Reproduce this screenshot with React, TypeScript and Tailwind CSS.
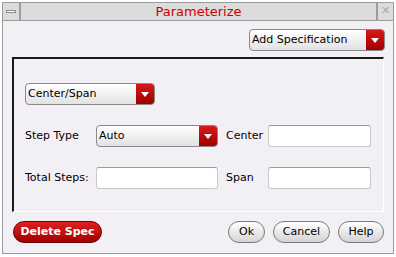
import { ReactNode } from 'react'

const font = { fontFamily: '"DejaVu Sans", Verdana, sans-serif' }

function Dropdown({ label, className }: { label: string; className: string }) {
  return (
    <div className={`flex h-[22px] items-stretch overflow-hidden rounded-[4px] border border-[#8a8a8a] bg-gradient-to-b from-white to-[#e2e2e2] ${className}`}>
      <span className="flex flex-1 items-center pl-[2px] text-[11px] text-black">{label}</span>
      <span className="flex w-[18px] items-center justify-center bg-gradient-to-b from-[#d81818] to-[#a00000]">
        <svg width="8" height="5" viewBox="0 0 8 5"><path d="M0 0h8L4 5z" fill="#fff" /></svg>
      </span>
    </div>
  )
}

function Field({ className }: { className: string }) {
  return <div className={`h-[22px] rounded-[3px] border border-[#c8c8c8] border-t-[#9a9a9a] bg-white ${className}`} />
}

function GrayButton({ children, className }: { children: ReactNode; className: string }) {
  return (
    <button className={`flex h-[22px] items-center justify-center rounded-full border border-[#7a7a7a] bg-gradient-to-b from-white to-[#d4d4d4] text-[11px] text-black ${className}`}>
      {children}
    </button>
  )
}

export default function App() {
  return (
    <div className="h-[257px] w-[396px] bg-white" style={font}>
      <div className="ml-[2px] mt-[2px] flex h-[252px] w-[392px] flex-col border border-[#9c9c9c] bg-[#f3f0f5]">
        {/* title bar */}
        <div className="flex h-[18px] border-b border-[#9c9c9c] bg-[#dcdcdc]">
          <div className="flex w-[18px] items-center justify-center border-r-2 border-[#9c9c9c]">
            <span className="block h-[3px] w-[10px] border border-[#888] bg-white" />
          </div>
          <div className="flex-1 text-center text-[13px] leading-[18px] text-[#cc0000]">Parameterize</div>
          <div className="flex w-[17px] items-center justify-center border-l-2 border-[#9c9c9c] text-[11px] text-[#aaa]">✕</div>
        </div>

        <div className="flex justify-end pr-[8px] pt-[8px]">
          <Dropdown label="Add Specification" className="w-[136px]" />
        </div>

        {/* frame */}
        <div className="ml-[9px] mt-[6px] h-[155px] w-[372px] border-l-2 border-t-2 border-b border-r border-b-white border-l-[#1a1a1a] border-r-white border-t-[#1a1a1a]">
          <div className="pl-[11px] pt-[24px]">
            <Dropdown label="Center/Span" className="w-[130px]" />
          </div>
          <div className="mt-[20px] flex items-center pl-[11px] text-[11px] text-black">
            <span className="w-[71px]">Step Type</span>
            <Dropdown label="Auto" className="w-[122px]" />
            <span className="ml-[8px] w-[42px]">Center</span>
            <Field className="w-[103px]" />
          </div>
          <div className="mt-[20px] flex items-center pl-[11px] text-[11px] text-black">
            <span className="w-[71px]">Total Steps:</span>
            <Field className="w-[122px]" />
            <span className="ml-[8px] w-[42px]">Span</span>
            <Field className="w-[103px]" />
          </div>
        </div>

        <div className="mt-[9px] flex items-center pl-[10px]">
          <button className="flex h-[22px] w-[89px] items-center justify-center rounded-full border border-[#700000] bg-gradient-to-b from-[#e02020] to-[#a00000] text-[11px] font-bold text-white">
            Delete Spec
          </button>
          <div className="ml-auto flex gap-[8px] pr-[9px]">
            <GrayButton className="w-[37px]">Ok</GrayButton>
            <GrayButton className="w-[57px]">Cancel</GrayButton>
            <GrayButton className="w-[46px]">Help</GrayButton>
          </div>
        </div>
      </div>
    </div>
  )
}
